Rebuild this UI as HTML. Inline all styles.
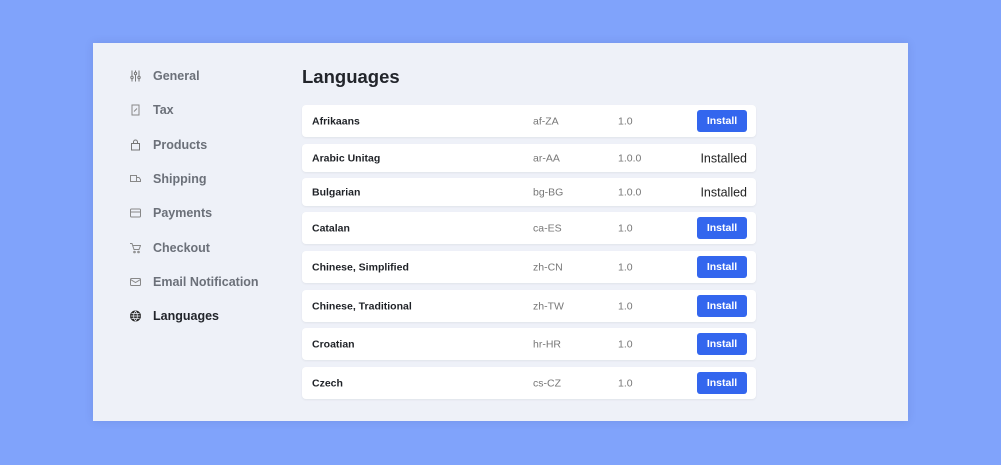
<!DOCTYPE html>
<html><head><style>
body{margin:0;width:1001px;height:465px;background:#80a3fb;font-family:"Liberation Sans",sans-serif;position:relative;overflow:hidden}
.panel{position:absolute;left:93px;top:43px;width:815px;height:378px;background:#eef1f8;box-shadow:0 0 8px rgba(40,60,120,.15)}
.nav{position:absolute;left:153px;font-size:12.5px;color:#6b7079;font-weight:bold;transform:translateY(-50%)}
.ic{position:absolute;left:130px;width:11px;height:11px;transform:translateY(-50%)}
h1{position:absolute;left:302px;top:66px;margin:0;font-size:18.5px;font-weight:bold;color:#22252b}
.row{position:absolute;left:302px;width:454px;background:#fff;border-radius:4px;box-shadow:0 1px 2px rgba(0,0,0,.06)}
.row span{position:absolute;top:50%;transform:translateY(-45%);font-size:10.5px}
.n{left:10px;font-weight:bold;color:#1f2227}
.c{left:231px;color:#777}
.v{left:316px;color:#777}
.b{right:9px;background:#3366ee;color:#fff;width:50px;height:22px;line-height:22px;text-align:center;border-radius:3px;font-weight:bold}
.row span.b{transform:translateY(-50%)}
.i{right:9px;font-size:12.5px!important;color:#222}
</style></head><body>
<div class="panel"></div>
<svg class="ic" style="top:76px" viewBox="0 0 11 11" fill="none" stroke="#777" stroke-width="1"><path d="M2 0v11M5.5 0v11M9 0v11"/><circle cx="2" cy="7" r="1.2" fill="#eef1f8"/><circle cx="5.5" cy="3" r="1.2" fill="#eef1f8"/><circle cx="9" cy="7" r="1.2" fill="#eef1f8"/></svg>
<div class="nav" style="top:76px">General</div>
<svg class="ic" style="top:110px" viewBox="0 0 11 11" fill="none" stroke="#888"><rect x="2" y="0.5" width="7" height="10"/><path d="M4 7l3-3"/></svg>
<div class="nav" style="top:110px">Tax</div>
<svg class="ic" style="top:145px" viewBox="0 0 11 11" fill="none" stroke="#777"><rect x="1.5" y="4" width="8" height="6.5"/><path d="M3.5 4V2.5a2 2 0 0 1 4 0V4"/></svg>
<div class="nav" style="top:145px">Products</div>
<svg class="ic" style="top:179px" viewBox="0 0 11 11" fill="none" stroke="#888"><rect x="0.5" y="2" width="6" height="6"/><path d="M6.5 4h2.5l1.5 2v2h-4"/></svg>
<div class="nav" style="top:179px">Shipping</div>
<svg class="ic" style="top:213px" viewBox="0 0 11 11" fill="none" stroke="#888"><rect x="0.5" y="1.5" width="10" height="8" rx="1"/><path d="M0.5 4.5h10"/></svg>
<div class="nav" style="top:213px">Payments</div>
<svg class="ic" style="top:248px" viewBox="0 0 11 11" fill="none" stroke="#888"><path d="M0 1h2l2 6h5l1.5-4H3"/><circle cx="4.5" cy="9.5" r=".8"/><circle cx="8.5" cy="9.5" r=".8"/></svg>
<div class="nav" style="top:248px">Checkout</div>
<svg class="ic" style="top:282px" viewBox="0 0 11 11" fill="none" stroke="#888"><rect x="0.5" y="2" width="10" height="7" rx="1"/><path d="M0.5 3l5 3 5-3"/></svg>
<div class="nav" style="top:282px">Email Notification</div>
<svg class="ic" style="top:316px" viewBox="0 0 11 11" fill="none" stroke="#222"><circle cx="5.5" cy="5.5" r="5" fill="#333"/><path stroke="#eef1f8" stroke-width=".7" d="M0.5 5.5h10M1.5 3h8M1.5 8h8M5.5 0.5c-2.5 3-2.5 7 0 10M5.5 0.5c2.5 3 2.5 7 0 10"/></svg>
<div class="nav" style="top:316px;color:#22252b">Languages</div>
<h1>Languages</h1>
<div class="row" style="top:105px;height:32px"><span class="n">Afrikaans</span><span class="c">af-ZA</span><span class="v">1.0</span><span class="b">Install</span></div>
<div class="row" style="top:144px;height:28px"><span class="n">Arabic Unitag</span><span class="c">ar-AA</span><span class="v">1.0.0</span><span class="i">Installed</span></div>
<div class="row" style="top:178px;height:28px"><span class="n">Bulgarian</span><span class="c">bg-BG</span><span class="v">1.0.0</span><span class="i">Installed</span></div>
<div class="row" style="top:212px;height:32px"><span class="n">Catalan</span><span class="c">ca-ES</span><span class="v">1.0</span><span class="b">Install</span></div>
<div class="row" style="top:251px;height:32px"><span class="n">Chinese, Simplified</span><span class="c">zh-CN</span><span class="v">1.0</span><span class="b">Install</span></div>
<div class="row" style="top:290px;height:32px"><span class="n">Chinese, Traditional</span><span class="c">zh-TW</span><span class="v">1.0</span><span class="b">Install</span></div>
<div class="row" style="top:328px;height:32px"><span class="n">Croatian</span><span class="c">hr-HR</span><span class="v">1.0</span><span class="b">Install</span></div>
<div class="row" style="top:367px;height:32px"><span class="n">Czech</span><span class="c">cs-CZ</span><span class="v">1.0</span><span class="b">Install</span></div>
</body></html>
